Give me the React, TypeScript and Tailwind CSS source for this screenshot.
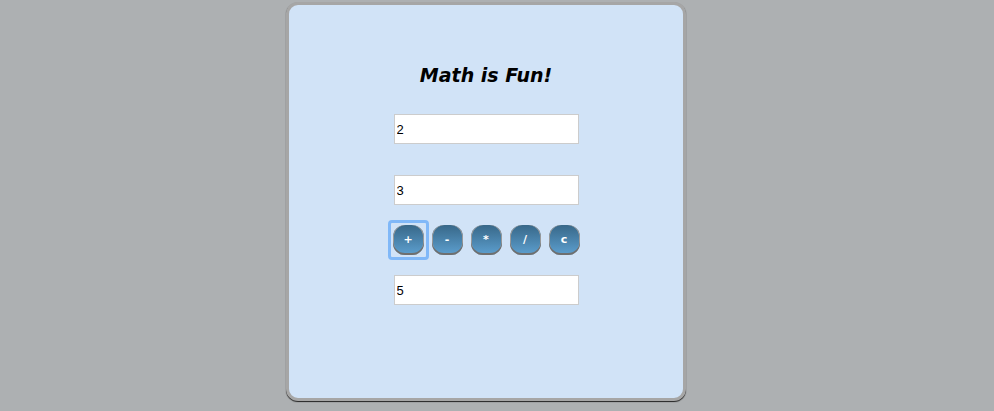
import { useState } from 'react';

const ops = ['+', '-', '*', '/', 'c'];

const Field = ({ value }: { value: string }) => (
  <input
    readOnly
    value={value}
    className="block h-[30px] w-[185px] border border-[#cccccc] bg-white pl-[2px] text-[13px] text-black outline-none [font-family:'Liberation_Sans',Arial,sans-serif]"
  />
);

const OpButton = ({ op }: { op: string }) => (
  <button className="flex h-[30px] w-[31px] items-center justify-center rounded-[12px] bg-gradient-to-b from-[#386889] to-[#5da0d0] text-[11px] font-bold text-white shadow-[inset_0_-2px_0_#6f6f6f,inset_1px_0_0_#9a9a9a,inset_-1px_0_0_#9a9a9a] [font-family:'DejaVu_Sans',Verdana,sans-serif]">
    {op}
  </button>
);

export default function App() {
  const [a] = useState('2');
  const [b] = useState('3');
  const [result] = useState('5');

  return (
    <div className="min-h-[411px] bg-[#adb0b2] pt-[2px]">
      <div className="ml-[286px] flex h-[399px] w-[400px] flex-col items-center rounded-[12px] border-[3px] border-[#a6a6a6] bg-[#d1e3f7] pt-[58px] shadow-[0_1px_1px_#222]">
        <h1 className="text-[19px] leading-[24px] font-bold italic text-black [font-family:'DejaVu_Sans',Verdana,sans-serif]">
          Math is Fun!
        </h1>
        <div className="mt-[27px]">
          <Field value={a} />
        </div>
        <div className="mt-[31px]">
          <Field value={b} />
        </div>
        <div className="mt-[20px] flex gap-[8px]">
          {ops.map((op, i) =>
            i === 0 ? (
              <span key={op} className="-m-[5px] rounded-[4px] border-[3px] border-[#80b8f8] p-[2px]">
                <OpButton op={op} />
              </span>
            ) : (
              <OpButton key={op} op={op} />
            )
          )}
        </div>
        <div className="mt-[20px]">
          <Field value={result} />
        </div>
      </div>
    </div>
  );
}
